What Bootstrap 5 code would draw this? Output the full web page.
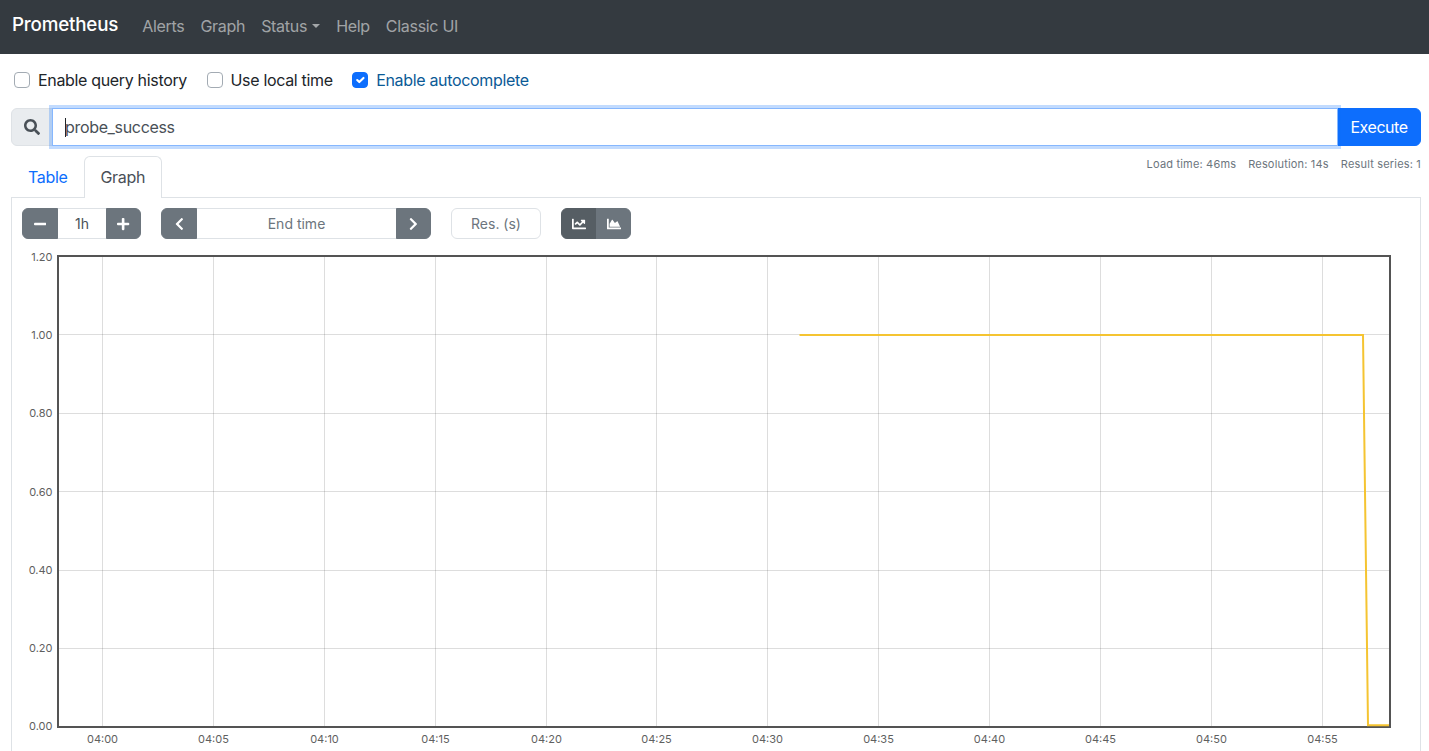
<!DOCTYPE html>
<html lang="en"><head><meta charset="utf-8"><title>Prometheus</title>
<link href="https://cdn.jsdelivr.net/npm/bootstrap@5.3.0/dist/css/bootstrap.min.css" rel="stylesheet">
<style>
html,body{height:751px;overflow:hidden}
body{font-family:Inter,"Liberation Sans",sans-serif;letter-spacing:-.33px;color:#212529;background:#fff}
.top-bar{background:#343a40;height:54px;padding:0 12px}
.top-bar .navbar-brand{color:#fff;font-size:18.8px;font-weight:500;padding:0;margin-right:16px;margin-top:-4px;letter-spacing:-.2px}
.top-bar .nav-link{color:rgba(255,255,255,.55);padding:6px 8px 8px;letter-spacing:-.3px}
.top-bar .dropdown-toggle::after{margin-left:.32em}
.opts{padding:0 14px;height:52px;margin-bottom:2px}
.opts .form-check{margin:0 19.5px 0 0;min-height:0;padding-left:24px}
.opts .form-check-label.on{color:#0b5a96}
.opts .form-check-input{width:16px;height:16px;margin-left:-24px;margin-top:4px;border-color:#a3abb3}
.opts .form-check-input:checked{border-color:#0d6efd}
.query-row{padding:0 8px 0 11px}
.query-row .input-group-text{width:42px;padding:0;justify-content:center;color:#495057;background:#e9ecef}
.query-box{display:flex;align-items:center;border-color:#86b7fe;box-shadow:0 0 0 3px rgba(13,110,253,.25);color:#495057;padding:0 12px;z-index:3;flex:1 1 auto;height:38px}
.caret-mark{display:inline-block;width:1px;height:19px;background:#212529;margin-right:-1px}
.exec-btn{width:84px;padding:0;z-index:4;letter-spacing:-.45px}
.tab-row{padding:0 8px 0 12px;margin-top:10px;position:relative;height:41px}
.tab-row .nav-tabs{border:0}
.tab-row .nav-link{padding:0 16px;height:42px;line-height:41px;border-bottom:0}
.tab-row .nav-item:first-child .nav-link{padding:0 15px}
.tab-row .nav-link.active{color:#495057;border-color:#dee2e6 #dee2e6 #fff;position:relative;z-index:2}
.stats{font-size:11px;letter-spacing:.18px;color:#6c757d;gap:12px;line-height:16px}
.panel-box{margin:0 8px 0 11px;border:1px solid #dee2e6;padding:10px 10px 0;height:600px}
.ctrl-row{gap:20px;height:31px}
.ctrl-row .btn{padding:0;height:31px;display:flex;align-items:center;justify-content:center;background:#6c757d;border-color:#6c757d}
.ctrl-row .btn svg{fill:#fff;display:block}
.ctrl-row .form-control{font-size:14px;text-align:center;padding:0;height:31px;color:#495057;letter-spacing:0}
.ctrl-row .form-control::placeholder{color:#6c757d;opacity:1}
.ctrl-row .w36{width:36px}.ctrl-row .w35{width:35px}
.ctrl-row .form-control.w48{width:50px;flex:none}
.ctrl-row .form-control.w199{width:201px;flex:none}
.ctrl-row .form-control.w90{width:90px;flex:none}
.ctrl-row .btn.on{background:#565e64;border-color:#565e64}
.plot-svg{display:block;margin:0 0 0 -11px;overflow:visible}
.plot-svg text{font-family:Inter,"Liberation Sans",sans-serif;font-size:11px;letter-spacing:0;fill:#5f5f5f}
</style></head>
<body>
<nav class="navbar navbar-expand top-bar">
  <a class="navbar-brand" href="#">Prometheus</a>
  <ul class="navbar-nav">
    <li class="nav-item"><a class="nav-link" href="#">Alerts</a></li>
    <li class="nav-item"><a class="nav-link" href="#">Graph</a></li>
    <li class="nav-item dropdown"><a class="nav-link dropdown-toggle" href="#">Status</a></li>
    <li class="nav-item"><a class="nav-link" href="#">Help</a></li>
    <li class="nav-item"><a class="nav-link" href="#">Classic UI</a></li>
  </ul>
</nav>
<div class="opts d-flex align-items-center">
  <div class="form-check"><input class="form-check-input" type="checkbox" id="c1"><label class="form-check-label" for="c1">Enable query history</label></div>
  <div class="form-check"><input class="form-check-input" type="checkbox" id="c2"><label class="form-check-label" for="c2">Use local time</label></div>
  <div class="form-check"><input class="form-check-input" type="checkbox" id="c3" checked><label class="form-check-label on" for="c3">Enable autocomplete</label></div>
</div>
<div class="query-row">
  <div class="input-group">
    <span class="input-group-text"><svg width="16" height="16" viewBox="0 0 512 512" fill="currentColor"><path d="M505 442.7L405.3 343c-4.5-4.5-10.6-7-17-7H372c27.6-35.3 44-79.7 44-128C416 93.1 322.9 0 208 0S0 93.1 0 208s93.1 208 208 208c48.3 0 92.7-16.4 128-44v16.3c0 6.4 2.5 12.5 7 17l99.7 99.7c9.4 9.4 24.6 9.4 33.9 0l28.3-28.3c9.4-9.4 9.4-24.6.1-34zM208 336c-70.7 0-128-57.2-128-128 0-70.7 57.2-128 128-128 70.7 0 128 57.2 128 128 0 70.7-57.2 128-128 128z"/></svg></span>
    <div class="form-control query-box"><span class="caret-mark"></span><span>probe_success</span></div>
    <button class="btn btn-primary exec-btn" type="button">Execute</button>
  </div>
</div>
<div class="tab-row d-flex justify-content-between align-items-start">
  <ul class="nav nav-tabs">
    <li class="nav-item"><a class="nav-link" href="#">Table</a></li>
    <li class="nav-item"><a class="nav-link active" href="#">Graph</a></li>
  </ul>
  <div class="stats d-flex"><span>Load time: 46ms</span><span>Resolution: 14s</span><span>Result series: 1</span></div>
</div>
<div class="panel-box">
  <div class="ctrl-row d-flex">
    <div class="input-group flex-nowrap w-auto">
      <button class="btn btn-secondary w36" type="button"><svg width="12.25" height="14" viewBox="0 0 448 512"><path d="M416 208H32c-17.67 0-32 14.33-32 32v32c0 17.67 14.33 32 32 32h384c17.67 0 32-14.33 32-32v-32c0-17.67-14.33-32-32-32z"/></svg></button>
      <input class="form-control w48" type="text" value="1h" aria-label="Range">
      <button class="btn btn-secondary w35" type="button"><svg width="12.25" height="14" viewBox="0 0 448 512"><path d="M416 208H272V64c0-17.67-14.33-32-32-32h-32c-17.67 0-32 14.33-32 32v144H32c-17.67 0-32 14.33-32 32v32c0 17.67 14.33 32 32 32h144v144c0 17.67 14.33 32 32 32h32c17.67 0 32-14.33 32-32V304h144c17.67 0 32-14.33 32-32v-32c0-17.67-14.33-32-32-32z"/></svg></button>
    </div>
    <div class="input-group flex-nowrap w-auto">
      <button class="btn btn-secondary w36" type="button"><svg width="8.75" height="14" viewBox="0 0 320 512"><path d="M34.52 239.03L228.87 44.69c9.37-9.37 24.57-9.37 33.94 0l22.67 22.67c9.36 9.36 9.37 24.52.04 33.9L131.49 256l154.02 154.75c9.34 9.38 9.32 24.54-.04 33.9l-22.67 22.67c-9.37 9.37-24.57 9.37-33.94 0L34.52 272.97c-9.37-9.37-9.37-24.57 0-33.94z"/></svg></button>
      <input class="form-control w199" type="text" placeholder="End time" aria-label="End time">
      <button class="btn btn-secondary w35" type="button"><svg width="8.75" height="14" viewBox="0 0 320 512"><path d="M285.476 272.971L91.132 467.314c-9.373 9.373-24.569 9.373-33.941 0l-22.667-22.667c-9.357-9.357-9.375-24.522-.04-33.901L188.505 256 34.484 101.255c-9.335-9.379-9.317-24.544.04-33.901l22.667-22.667c9.373-9.373 24.569-9.373 33.941 0L285.475 239.03c9.373 9.372 9.373 24.568.001 33.941z"/></svg></button>
    </div>
    <input class="form-control w90" type="text" placeholder="Res. (s)" aria-label="Resolution">
    <div class="btn-group">
      <button class="btn btn-secondary on w36" type="button"><svg width="14" height="14" viewBox="0 0 512 512"><path d="M496 384H64V80c0-8.84-7.16-16-16-16H16C7.16 64 0 71.16 0 80v336c0 17.67 14.33 32 32 32h464c8.84 0 16-7.16 16-16v-32c0-8.84-7.16-16-16-16zM464 96H345.94c-21.38 0-32.09 25.85-16.97 40.97l32.4 32.4L288 242.75l-73.37-73.37c-12.5-12.5-32.76-12.5-45.25 0l-68.69 68.69c-6.25 6.25-6.25 16.38 0 22.63l22.62 22.62c6.25 6.25 16.38 6.25 22.63 0L192 237.25l73.37 73.37c12.5 12.5 32.76 12.5 45.25 0l96-96 32.4 32.4c15.12 15.12 40.97 4.41 40.97-16.97V112c.01-8.84-7.15-16-15.99-16z"/></svg></button>
      <button class="btn btn-secondary w35" type="button"><svg width="14" height="14" viewBox="0 0 512 512"><path d="M500 384c6.6 0 12 5.4 12 12v40c0 6.6-5.4 12-12 12H12c-6.6 0-12-5.4-12-12V76c0-6.6 5.4-12 12-12h40c6.6 0 12 5.4 12 12v308h436zM372.7 159.5L288 216l-85.3-113.7c-5.1-6.8-15.5-6.3-19.9 1L96 248v104h384l-89.9-187.8c-3.2-6.5-11.4-8.7-17.4-4.7z"/></svg></button>
    </div>
  </div>
  <svg class="plot-svg" id="plot" width="1410" height="512" viewBox="11 239 1410 512"></svg>
</div>
<script src="https://cdn.jsdelivr.net/npm/bootstrap@5.3.0/dist/js/bootstrap.bundle.min.js"></script>
<script>
(function(){
  var L=58,R=1390,T=256,B=727,s='';
  var yt=['1.20','1.00','0.80','0.60','0.40','0.20','0.00'];
  yt.forEach(function(t,i){var y=T+(B-T)*i/6;
    if(i>0&&i<6){var yy=Math.floor(y)+.5;s+='<line x1="'+L+'" x2="'+R+'" y1="'+yy+'" y2="'+yy+'" stroke="#545454" stroke-opacity=".2"/>';}
    s+='<text x="52.5" y="'+(261+78.17*i)+'" text-anchor="end">'+t+'</text>';});
  var xt=['04:00','04:05','04:10','04:15','04:20','04:25','04:30','04:35','04:40','04:45','04:50','04:55'];
  xt.forEach(function(t,i){var x=Math.round(102+110.88*i)+.5;
    s+='<line x1="'+x+'" x2="'+x+'" y1="'+T+'" y2="'+B+'" stroke="#545454" stroke-opacity=".2"/>';
    s+='<text x="'+x+'" y="743" text-anchor="middle">'+t+'</text>';});
  s+='<rect x="'+L+'" y="'+T+'" width="'+(R-L)+'" height="'+(B-T)+'" fill="none" stroke="#545454" stroke-width="2"/>';
  s+='<polyline points="799.5,335 1363,335 1368,725.2 1389,725.2" fill="none" stroke="#f5c431" stroke-width="2"/>';
  document.getElementById('plot').innerHTML=s;
})();
</script>
</body></html>
